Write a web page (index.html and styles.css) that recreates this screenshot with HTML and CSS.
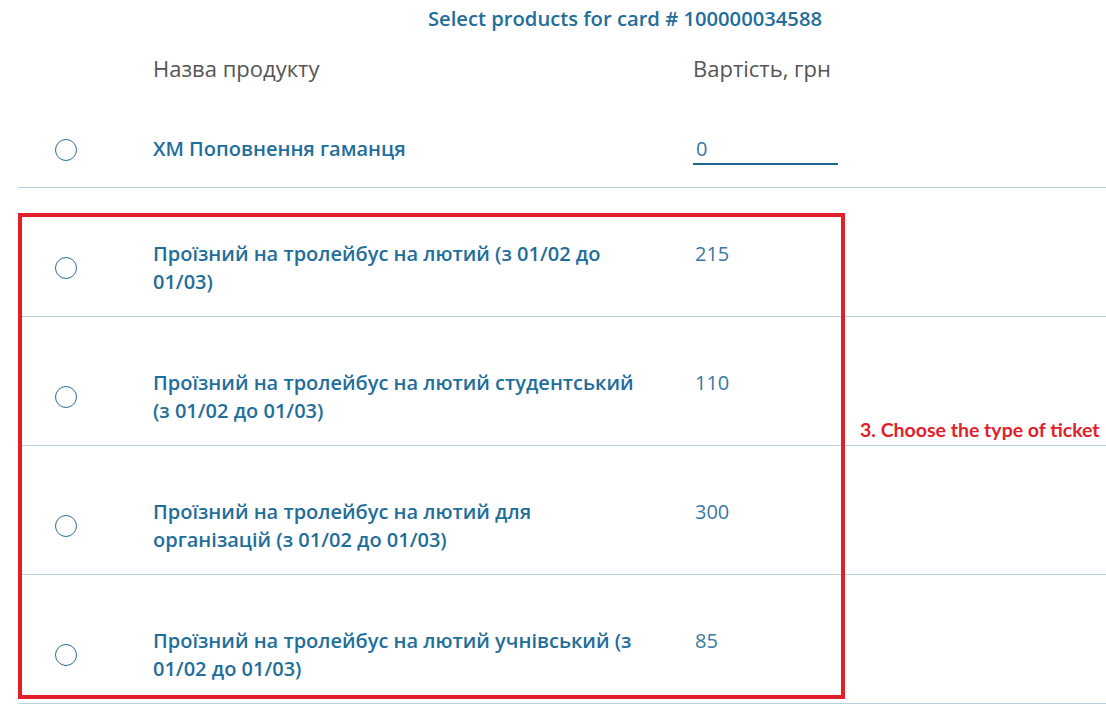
FILE: index.html
```html
<!DOCTYPE html>
<html lang="uk">
<head>
<meta charset="utf-8">
<title>Select products</title>
<link rel="stylesheet" href="styles.css">
</head>
<body>
<div class="page">
  <div class="title">Select products for card # 100000034588</div>
  <div class="table">
    <div class="row head">
      <div class="c-radio"></div>
      <div class="body">
        <div class="c-name">Назва продукту</div>
        <div class="c-val">Вартість, грн</div>
      </div>
    </div>
    <div class="row first">
      <div class="c-radio"><span class="radio"></span></div>
      <div class="body">
        <div class="c-name name">ХМ Поповнення гаманця</div>
        <div class="c-val"><div class="input">0</div></div>
      </div>
    </div>
    <div class="row item">
      <div class="c-radio"><span class="radio"></span></div>
      <div class="body">
        <div class="c-name name">Проїзний на тролейбус на лютий (з 01/02 до 01/03)</div>
        <div class="c-val val">215</div>
      </div>
    </div>
    <div class="row item">
      <div class="c-radio"><span class="radio"></span></div>
      <div class="body">
        <div class="c-name name">Проїзний на тролейбус на лютий студентський (з 01/02 до 01/03)</div>
        <div class="c-val val">110</div>
      </div>
    </div>
    <div class="row item">
      <div class="c-radio"><span class="radio"></span></div>
      <div class="body">
        <div class="c-name name">Проїзний на тролейбус на лютий для організацій (з 01/02 до 01/03)</div>
        <div class="c-val val">300</div>
      </div>
    </div>
    <div class="row item">
      <div class="c-radio"><span class="radio"></span></div>
      <div class="body">
        <div class="c-name name">Проїзний на тролейбус на лютий учнівський (з 01/02 до 01/03)</div>
        <div class="c-val val">85</div>
      </div>
    </div>
    <div class="highlight"></div>
    <div class="note">3. Choose the type of ticket</div>
  </div>
</div>
</body>
</html>
```
FILE: styles.css
```css
html, body {
  margin: 0;
  padding: 0;
  background: #ffffff;
}
body {
  font-family: "Open Sans", "Noto Sans", sans-serif;
  width: 1106px;
  height: 709px;
  overflow: hidden;
}
.page {
  position: relative;
}
.title {
  padding-left: 428px;
  margin-top: 6px;
  font-size: 20.2px;
  line-height: 24px;
  font-weight: 600;
  color: #1f6e9b;
  white-space: nowrap;
}
.table {
  position: relative;
  margin-left: 18px;
  margin-top: 24px;
}
.row {
  display: grid;
  grid-template-columns: 135px 1fr;
  align-items: center;
}
.body {
  display: flex;
  align-items: flex-start;
}
.head {
  font-size: 22px;
  line-height: 28px;
  color: #555555;
  height: 28px;
}
.c-radio {
  padding-left: 37px;
  display: flex;
  align-items: center;
}
.c-name {
  width: 540px;
  flex: none;
  box-sizing: border-box;
  padding-right: 50px;
}
.first {
  height: 106px;
  box-sizing: border-box;
  padding-top: 31px;
  border-bottom: 1px solid #b8d2e2;
}
.item {
  height: 129px;
  box-sizing: border-box;
  padding-top: 31px;
  border-bottom: 1px solid #b8d2e2;
}
.radio {
  display: block;
  width: 20px;
  height: 20px;
  border: 1.6px solid #2a6e98;
  border-radius: 50%;
}
.name {
  font-size: 20px;
  line-height: 28px;
  font-weight: 600;
  color: #1f6e9b;
}
.val {
  font-size: 20px;
  line-height: 28px;
  color: #3b77a1;
  padding-left: 2px;
}
.input {
  width: 145px;
  box-sizing: border-box;
  padding-left: 3px;
  font-size: 20px;
  line-height: 28px;
  color: #3b77a1;
  border-bottom: 2px solid #1f6690;
}
.highlight {
  position: absolute;
  left: 0;
  top: 159px;
  width: 827px;
  height: 486px;
  box-sizing: border-box;
  border: 4px solid #e1202a;
  pointer-events: none;
}
.note {
  position: absolute;
  left: 842px;
  top: 364px;
  font-family: "Lato", "Liberation Sans", sans-serif;
  font-weight: 700;
  font-size: 19.5px;
  line-height: 24px;
  color: #e1202a;
  white-space: nowrap;
}
```
